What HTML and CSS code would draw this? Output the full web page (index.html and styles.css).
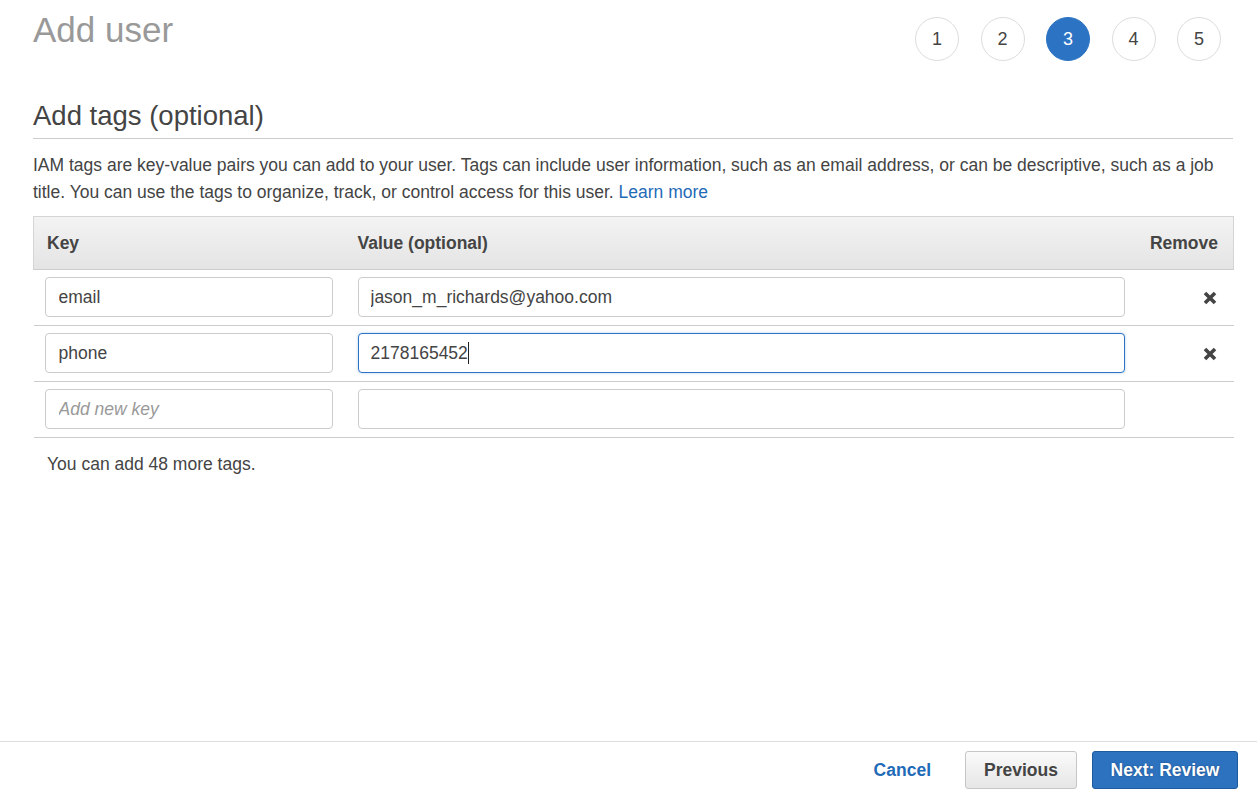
FILE: index.html
```html
<!DOCTYPE html>
<html lang="en">
<head>
<meta charset="utf-8">
<title>Add user</title>
<link rel="stylesheet" href="styles.css">
</head>
<body>
<div class="page">
  <main class="main">
    <div class="title-row">
      <h1 class="title">Add user</h1>
      <ol class="steps">
        <li class="step">1</li>
        <li class="step">2</li>
        <li class="step active">3</li>
        <li class="step">4</li>
        <li class="step">5</li>
      </ol>
    </div>
    <h2 class="section-title">Add tags (optional)</h2>
    <p class="desc">IAM tags are key-value pairs you can add to your user. Tags can include user information, such as an email address, or can be descriptive, such as a job title. You can use the tags to organize, track, or control access for this user. <a class="link" href="#">Learn more</a></p>
    <table class="tags">
      <colgroup>
        <col class="col-key">
        <col class="col-value">
        <col class="col-remove">
      </colgroup>
      <thead>
        <tr>
          <th class="th-key">Key</th>
          <th class="th-value">Value (optional)</th>
          <th class="th-remove">Remove</th>
        </tr>
      </thead>
      <tbody>
        <tr>
          <td class="td-key"><input class="field key-field" type="text" value="email"></td>
          <td class="td-value"><input class="field value-field" type="text" value="jason_m_richards@yahoo.com"></td>
          <td class="td-remove"><span class="remove-icon"><svg width="14" height="14" viewBox="0 0 14 14"><path d="M2 2 L12 12 M12 2 L2 12" stroke="#444" stroke-width="3.6" stroke-linecap="butt"/></svg></span></td>
        </tr>
        <tr>
          <td class="td-key"><input class="field key-field" type="text" value="phone"></td>
          <td class="td-value"><div class="field value-field focused">2178165452<span class="caret"></span></div></td>
          <td class="td-remove"><span class="remove-icon"><svg width="14" height="14" viewBox="0 0 14 14"><path d="M2 2 L12 12 M12 2 L2 12" stroke="#444" stroke-width="3.6" stroke-linecap="butt"/></svg></span></td>
        </tr>
        <tr>
          <td class="td-key"><input class="field key-field" type="text" placeholder="Add new key"></td>
          <td class="td-value"><input class="field value-field" type="text"></td>
          <td class="td-remove"></td>
        </tr>
      </tbody>
    </table>
    <div class="remaining">You can add 48 more tags.</div>
  </main>
  <footer class="footer">
    <a class="cancel" href="#">Cancel</a>
    <button class="btn btn-secondary" type="button">Previous</button>
    <button class="btn btn-primary" type="button">Next: Review</button>
  </footer>
</div>
</body>
</html>
```
FILE: styles.css
```css
* { box-sizing: border-box; }
html, body { margin: 0; padding: 0; background: #fff; }
body {
  font-family: "Liberation Sans", Arial, sans-serif;
  color: #444;
  font-size: 17.5px;
}
.page {
  display: flex;
  flex-direction: column;
  height: 793px;
  overflow: hidden;
}
.main {
  height: 741px;
  padding: 10px 24px 0 33px;
}
.title-row {
  display: flex;
  justify-content: space-between;
  align-items: flex-start;
}
.title {
  margin: 0;
  font-size: 35px;
  line-height: 40px;
  font-weight: normal;
  color: #999;
}
.steps {
  list-style: none;
  margin: 7px 12px 0 0;
  padding: 0;
  display: flex;
  gap: 21.5px;
}
.step {
  width: 44px;
  height: 44px;
  border-radius: 50%;
  border: 1px solid #ddd;
  display: flex;
  align-items: center;
  justify-content: center;
  font-size: 18px;
  color: #444;
}
.step.active {
  background: #2c74c3;
  border-color: #2c74c3;
  color: #fff;
}
.section-title {
  margin: 39px 0 0;
  font-size: 27.5px;
  line-height: 32px;
  font-weight: normal;
  color: #444;
  padding-bottom: 6px;
  border-bottom: 1px solid #ccc;
}
.desc {
  margin: 13px 0 0;
  font-size: 17.5px;
  line-height: 27px;
  color: #444;
}
.link { color: #1f6bb8; text-decoration: none; }
.tags {
  margin-top: 10px;
  width: 1200px;
  border-collapse: collapse;
  table-layout: fixed;
}
.col-key { width: 313px; }
.col-value { width: 791px; }
.col-remove { width: 96px; }
.tags thead tr {
  background: linear-gradient(#f3f3f3, #e4e4e4);
}
.tags th {
  height: 53px;
  padding: 0;
  font-size: 17.5px;
  font-weight: bold;
  color: #444;
  text-align: left;
  border-top: 1px solid #d5d5d5;
  border-bottom: 1px solid #ccc;
}
.th-key { padding-left: 13px !important; border-left: 1px solid #d5d5d5; }
.th-value { padding-left: 11px !important; }
.th-remove { text-align: right !important; padding-right: 15px !important; border-right: 1px solid #d5d5d5; }
.tags td {
  padding: 7px 0 8px;
  border-bottom: 1px solid #ccc;
  height: 55px;
}
.td-key { padding-left: 11px !important; }
.td-value { padding-left: 11px !important; }
.td-remove { text-align: right; padding-right: 17px !important; }
.field {
  display: block;
  height: 40px;
  border: 1px solid #ccc;
  border-radius: 4px;
  padding: 0 13px;
  font-family: "Liberation Sans", Arial, sans-serif;
  font-size: 17.5px;
  color: #444;
  background: #fff;
  outline: none;
  line-height: 38px;
}
.field::placeholder { color: #999; font-style: italic; }
.key-field { width: 288px; }
.value-field { width: 767px; padding: 0 12px; }
.focused {
  border-color: #2c74c3;
  box-shadow: 0 0 3px rgba(44, 116, 195, 0.35);
}
.caret {
  display: inline-block;
  width: 1px;
  height: 22px;
  background: #222;
  vertical-align: -5px;
}
.remove-icon { display: inline-block; width: 14px; height: 14px; vertical-align: middle; }
.remove-icon svg { display: block; }
.remaining {
  margin-top: 16px;
  padding-left: 14px;
  font-size: 17.5px;
  line-height: 20px;
  color: #444;
}
.footer {
  flex: none;
  height: 52px;
  border-top: 1px solid #ddd;
  display: flex;
  justify-content: flex-end;
  align-items: flex-start;
  padding: 9px 19px 0 0;
}
.cancel {
  color: #1f6bb8;
  font-weight: bold;
  font-size: 17.5px;
  text-decoration: none;
  line-height: 38px;
  margin-right: 34px;
}
.btn {
  height: 38px;
  border-radius: 3px;
  font-family: "Liberation Sans", Arial, sans-serif;
  font-size: 17.5px;
  font-weight: bold;
  padding: 0;
  cursor: pointer;
}
.btn-secondary {
  width: 112px;
  background: linear-gradient(#fafafa, #e6e6e6);
  border: 1px solid #c6c6c6;
  color: #444;
  margin-right: 15px;
}
.btn-primary {
  width: 146px;
  background: #2d72bf;
  border: 1px solid #1d5a9e;
  color: #fff;
  text-shadow: 0 0 2px rgba(0,0,0,0.35);
}
```
